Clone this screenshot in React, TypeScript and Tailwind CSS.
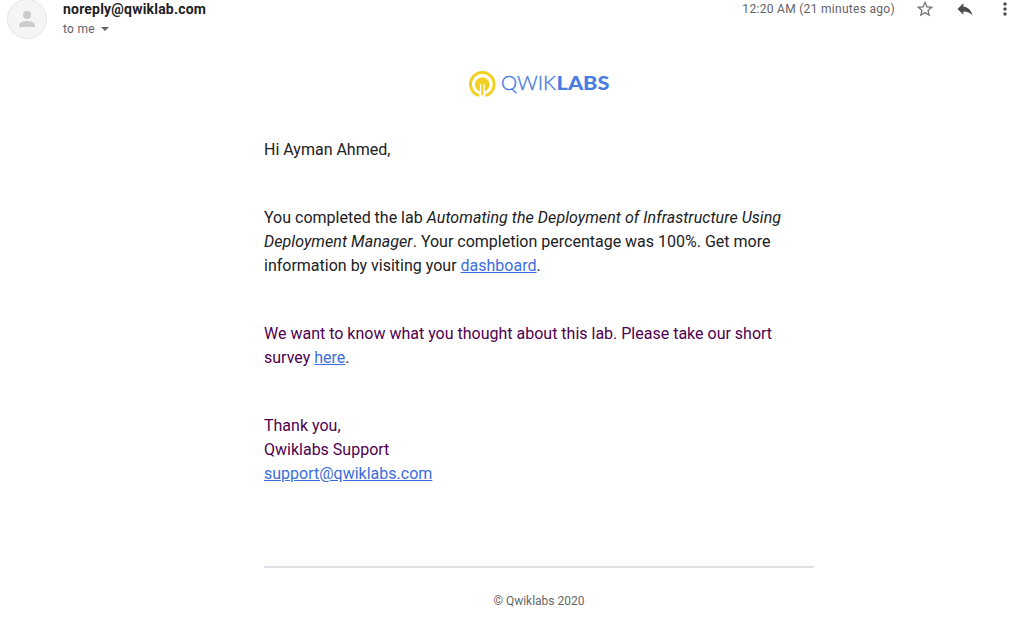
import React from "react";

function Avatar() {
  return (
    <svg className="block size-10 shrink-0" viewBox="0 0 40 40">
      <circle cx="20" cy="20" r="19.5" fill="#f5f5f5" stroke="#e6e6e6" strokeWidth="1" />
      <circle cx="20" cy="16" r="4" fill="#ccc" />
      <path d="M12 28v-2c0-2.7 5.3-4.1 8-4.1s8 1.4 8 4.1v2z" fill="#ccc" />
    </svg>
  );
}

function Icon({ d, fill }: { d: string; fill: string }) {
  return (
    <svg className="block size-5 shrink-0" viewBox="0 0 24 24" fill={fill}>
      <path d={d} />
    </svg>
  );
}

function Logo() {
  return (
    <svg className="block h-[30px] w-[144px]" viewBox="467 69 144 30">
      <g transform="translate(0 0.7)">
        <path d="M479.2 94.9A11.8 11.8 0 1 1 485.4 94.9" fill="none" stroke="#f2d122" strokeWidth="3" />
        <path d="M478.8 90.4A7.4 7.4 0 1 1 485.8 90.4Z" fill="#f2d122" />
        <path d="M479.9 83.5h4.8V98h-4.8z" fill="#fff" />
        <path d="M481.2 82h2.2v12.6h-2.2z" fill="#f2d122" />
      </g>
      <text x="501" y="90" textLength="55" lengthAdjust="spacingAndGlyphs" fill="#4a7de2" stroke="#4a7de2" strokeWidth="0.4" className="font-['Lato',sans-serif] text-[20px] font-light">QWIK</text>
      <text x="556.6" y="90" textLength="52.8" lengthAdjust="spacingAndGlyphs" fill="#4a7de2" className="font-['Lato',sans-serif] text-[19.5px] font-black">LABS</text>
    </svg>
  );
}

function MailLink({ children }: { children: React.ReactNode }) {
  return <a href="#" className="text-[#3b6de0] underline">{children}</a>;
}

export default function App() {
  return (
    <div className="h-[623px] w-[1023px] overflow-hidden bg-white font-['Roboto',sans-serif] text-[#202124]">
      <header className="flex h-[39px] items-end pl-[7px]">
        <Avatar />
        <div className="ml-4 flex h-[39px] flex-col">
          <div className="h-[19px] text-sm leading-[18px] font-bold tracking-[0.2px]">noreply@qwiklab.com</div>
          <div className="flex h-5 items-center gap-1.5 text-xs tracking-[0.3px] text-[#5f6368]">
            <span>to me</span>
            <svg className="block h-1 w-2" viewBox="0 0 8 4"><path d="M0 0h8L4 4z" fill="#666" /></svg>
          </div>
        </div>
        <div className="ml-auto flex h-[39px] items-start pr-2">
          <span className="mr-5 text-xs leading-[18px] tracking-[0.3px] text-[#5f6368]">12:20 AM (21 minutes ago)</span>
          <div className="-mt-px flex gap-5">
            <Icon fill="#777" d="M22 9.24l-7.19-.62L12 2 9.19 8.63 2 9.24l5.46 4.73L5.82 21 12 17.27 18.18 21l-1.63-7.03L22 9.24zM12 15.4l-3.76 2.27 1-4.28-3.32-2.88 4.38-.38L12 6.1l1.71 4.04 4.38.38-3.32 2.88 1 4.28L12 15.4z" />
            <Icon fill="#4b4b4b" d="M10 9V5l-7 7 7 7v-4.1c5 0 8.5 1.6 11 5.1-1-5-4-10-11-11z" />
            <Icon fill="#4b4b4b" d="M12 8c1.1 0 2-.9 2-2s-.9-2-2-2-2 .9-2 2 .9 2 2 2zm0 2c-1.1 0-2 .9-2 2s.9 2 2 2 2-.9 2-2-.9-2-2-2zm0 6c-1.1 0-2 .9-2 2s.9 2 2 2 2-.9 2-2-.9-2-2-2z" />
          </div>
        </div>
      </header>
      <main className="ml-[264px] w-[550px] pt-[30px] text-base leading-6">
        <div className="flex justify-center"><Logo /></div>
        <p className="mt-[39px]">Hi Ayman Ahmed,</p>
        <p className="mt-11">
          You completed the lab <em className="tracking-[0.06px]">Automating the Deployment of Infrastructure Using Deployment Manager</em>. Your completion percentage was 100%. Get more information by visiting your <MailLink>dashboard</MailLink>.
        </p>
        <div className="text-[#500050]">
          <p className="mt-11">We want to know what you thought about this lab. Please take our short survey <MailLink>here</MailLink>.</p>
          <p className="mt-11">
            Thank you,<br />Qwiklabs Support<br /><MailLink>support@qwiklabs.com</MailLink>
          </p>
        </div>
        <footer className="mt-20 border-t-2 border-[#e0e0e6] pt-[23px] text-center text-xs leading-5 text-[#666]">© Qwiklabs 2020</footer>
      </main>
    </div>
  );
}
